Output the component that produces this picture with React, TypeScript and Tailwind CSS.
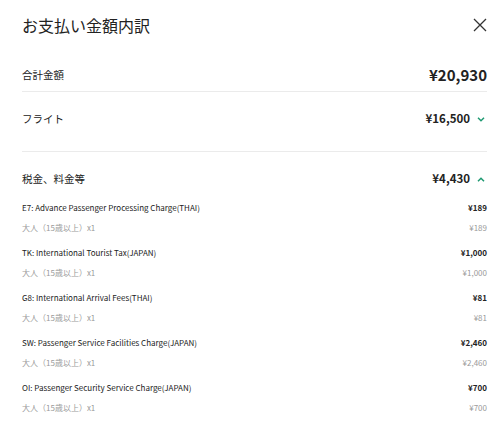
type Fee = {
  code: string;
  label: string;
  amount: string;
};

const fees: Fee[] = [
  { code: 'E7', label: 'Advance Passenger Processing Charge(THAI)', amount: '¥189' },
  { code: 'TK', label: 'International Tourist Tax(JAPAN)', amount: '¥1,000' },
  { code: 'G8', label: 'International Arrival Fees(THAI)', amount: '¥81' },
  { code: 'SW', label: 'Passenger Service Facilities Charge(JAPAN)', amount: '¥2,460' },
  { code: 'OI', label: 'Passenger Security Service Charge(JAPAN)', amount: '¥700' },
];

const Chevron = ({ up }: { up?: boolean }) => (
  <svg width="8" height="5" viewBox="0 0 8 5" className="ml-[7px] mr-[2px] text-[#1f9a72]">
    <path
      d={up ? 'M1 4.2 L4 1.2 L7 4.2' : 'M1 0.8 L4 3.8 L7 0.8'}
      fill="none"
      stroke="currentColor"
      strokeWidth="1.5"
    />
  </svg>
);

const App = () => {
  return (
    <div
      className="w-[500px] h-[433px] bg-white pl-[22px] pr-[13px] text-[#222] overflow-hidden"
      style={{ fontFamily: '"Noto Sans CJK JP", "Noto Sans", sans-serif' }}
    >
      {/* header */}
      <div className="h-[50px] flex items-center justify-between">
        <h1 className="text-[16px] leading-[22px] font-normal">お支払い金額内訳</h1>
        <svg width="14" height="14" viewBox="0 0 14 14" className="text-[#333]">
          <path d="M1 1 L13 13 M13 1 L1 13" stroke="currentColor" strokeWidth="1.3" fill="none" />
        </svg>
      </div>

      {/* total */}
      <div className="pt-[15px] pb-[7px] border-b border-[#ebebeb] flex items-center justify-between h-[42px]">
        <span className="text-[10.5px]">合計金額</span>
        <span className="text-[15px] font-bold leading-[20px]">¥20,930</span>
      </div>

      {/* flight */}
      <div className="pt-[17px] pb-[22px] border-b border-[#ebebeb]">
        <div className="h-[20px] flex items-center justify-between">
          <span className="text-[10.5px]">フライト</span>
          <div className="flex items-center">
            <span className="text-[11.5px] font-bold">¥16,500</span>
            <Chevron />
          </div>
        </div>
      </div>

      {/* taxes */}
      <div className="pt-[17px]">
        <div className="h-[20px] flex items-center justify-between">
          <span className="text-[10.5px]">税金、料金等</span>
          <div className="flex items-center">
            <span className="text-[11.5px] font-bold">¥4,430</span>
            <Chevron up />
          </div>
        </div>
        <ul className="mt-[9px] flex flex-col gap-[5px]">
          {fees.map((fee) => (
            <li key={fee.code}>
              <div className="h-[20px] flex items-center justify-between text-[8px]">
                <span>{fee.code}: {fee.label}</span>
                <span className="font-bold">{fee.amount}</span>
              </div>
              <div className="h-[20px] flex items-center justify-between text-[8px] text-[#9a9a9a]">
                <span>大人（15歳以上）x1</span>
                <span>{fee.amount}</span>
              </div>
            </li>
          ))}
        </ul>
      </div>
    </div>
  );
};

export default App;
